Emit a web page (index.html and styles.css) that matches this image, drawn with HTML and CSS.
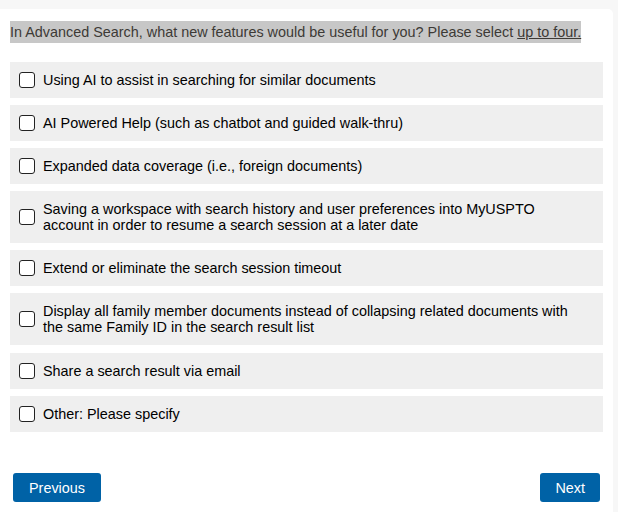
FILE: index.html
```html
<!DOCTYPE html>
<html lang="en">
<head>
    <meta charset="UTF-8">
    <title>Survey</title>
    <link rel="stylesheet" href="styles.css">
</head>
<body>

    <div class="card">
        <p class="question"><span>In Advanced Search, what new features would be useful for you? Please select <u>up to four.</u></span></p>

        <div class="options">
            <label class="option"><input type="checkbox"><span>Using AI to assist in searching for similar documents</span></label>
            <label class="option"><input type="checkbox"><span>AI Powered Help (such as chatbot and guided walk-thru)</span></label>
            <label class="option"><input type="checkbox"><span>Expanded data coverage (i.e., foreign documents)</span></label>
            <label class="option"><input type="checkbox"><span>Saving a workspace with search history and user preferences into MyUSPTO account in order to resume a search session at a later date</span></label>
            <label class="option"><input type="checkbox"><span>Extend or eliminate the search session timeout</span></label>
            <label class="option"><input type="checkbox"><span>Display all family member documents instead of collapsing related documents with the same Family ID in the search result list</span></label>
            <label class="option"><input type="checkbox"><span>Share a search result via email</span></label>
            <label class="option"><input type="checkbox"><span>Other: Please specify</span></label>
        </div>

        <div class="nav">
            <button class="nav-btn">Previous</button>
            <button class="nav-btn next-btn">Next</button>
        </div>
    </div>

</body>
</html>
```

FILE: styles.css
```css
body {
    margin: 0;
    padding-top: 9px;
    background-color: #f7f7f7;
    font-family: "Liberation Sans", Arial, sans-serif;
    font-size: 14.4px;
}

.card {
    width: 613px;
    min-height: 503px;
    box-sizing: border-box;
    background: white;
    border-top-right-radius: 5px;
    padding: 12px 10px 0 10px;
}

.question {
    margin: 0;
    line-height: 22px;
    color: #3d3a36;
}

    .question span {
        display: inline-block;
        background-color: #c7c7c7;
    }

.options {
    margin-top: 19px;
    display: flex;
    flex-direction: column;
    gap: 7px;
}

.option {
    display: flex;
    align-items: center;
    gap: 8px;
    padding: 10px 17px 10px 9px;
    background-color: #efefef;
    color: #000;
    line-height: 16px;
}

    .option:nth-child(7) {
        margin-top: 1px;
    }

    .option input {
        appearance: none;
        flex: none;
        width: 16px;
        height: 16px;
        margin: 0;
        border: 1.5px solid #222;
        border-radius: 3px;
        background: white;
    }

.nav {
    display: flex;
    justify-content: space-between;
    padding: 41px 3px 0 3px;
}

.nav-btn {
    height: 29px;
    padding: 0 16px;
    background-color: #0062a6;
    color: white;
    border: none;
    border-radius: 3px;
    font-family: "Liberation Sans", Arial, sans-serif;
    font-size: 14.4px;
    cursor: pointer;
}

.next-btn {
    padding: 0 15px;
}
```
